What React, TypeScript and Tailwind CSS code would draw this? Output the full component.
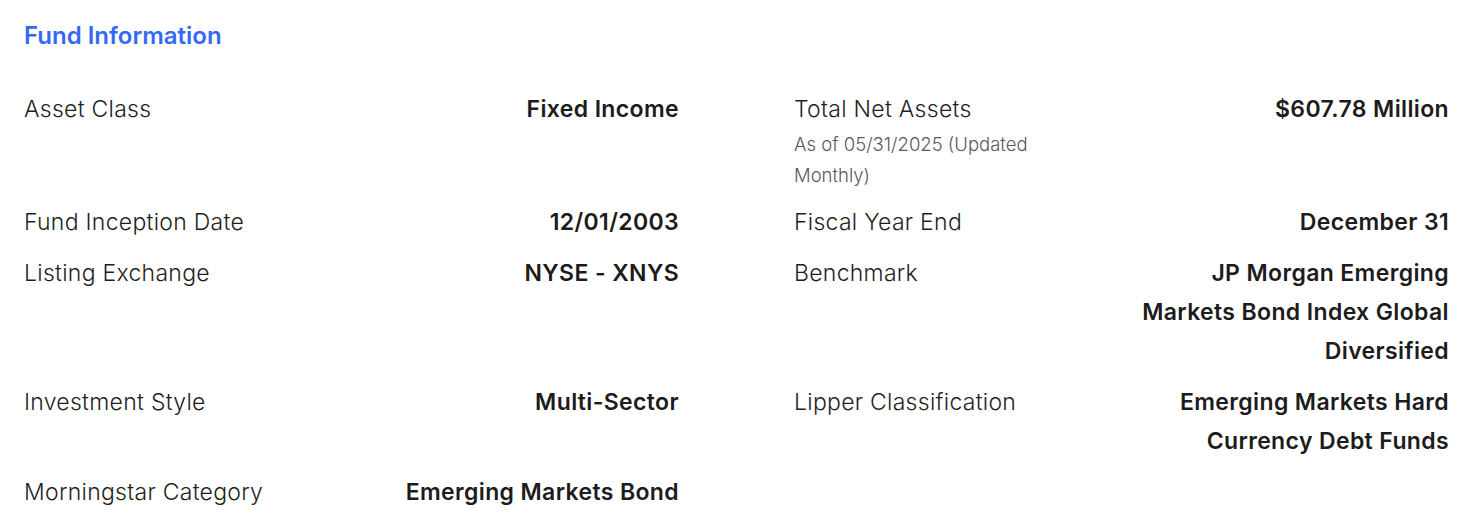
const font = { fontFamily: 'Inter, "Liberation Sans", sans-serif' }

type Row = { label: string; note?: string; value: string }

const rows: Row[] = [
  { label: 'Asset Class', value: 'Fixed Income' },
  { label: 'Total Net Assets', note: 'As of 05/31/2025 (Updated Monthly)', value: '$607.78 Million' },
  { label: 'Fund Inception Date', value: '12/01/2003' },
  { label: 'Fiscal Year End', value: 'December 31' },
  { label: 'Listing Exchange', value: 'NYSE - XNYS' },
  { label: 'Benchmark', value: 'JP Morgan Emerging Markets Bond Index Global Diversified' },
  { label: 'Investment Style', value: 'Multi-Sector' },
  { label: 'Lipper Classification', value: 'Emerging Markets Hard Currency Debt Funds' },
  { label: 'Morningstar Category', value: 'Emerging Markets Bond' },
]

function InfoRow({ label, note, value }: Row) {
  return (
    <div className="grid grid-cols-[1fr_320px] gap-x-6">
      <div>
        <div className="text-[23px] font-light leading-[39px] tracking-[0.012em] text-[#1f1f1f]">{label}</div>
        {note && (
          <div className="max-w-[250px] text-[18.5px] font-light leading-[31px] text-[#5a5a5a]">{note}</div>
        )}
      </div>
      <div className="text-right text-[23px] font-semibold leading-[39px] tracking-[0.016em] text-[#1c1c1c]">
        {value}
      </div>
    </div>
  )
}

export default function App() {
  return (
    <div className="min-h-screen bg-white pl-6 pr-[33px] pt-5" style={font}>
      <h2 className="text-[24px] font-semibold leading-8 text-[#3369f3]">Fund Information</h2>
      <div className="mt-[38px] grid grid-cols-2 gap-x-[115px] gap-y-3">
        {rows.map((r) => (
          <InfoRow key={r.label} {...r} />
        ))}
      </div>
    </div>
  )
}
